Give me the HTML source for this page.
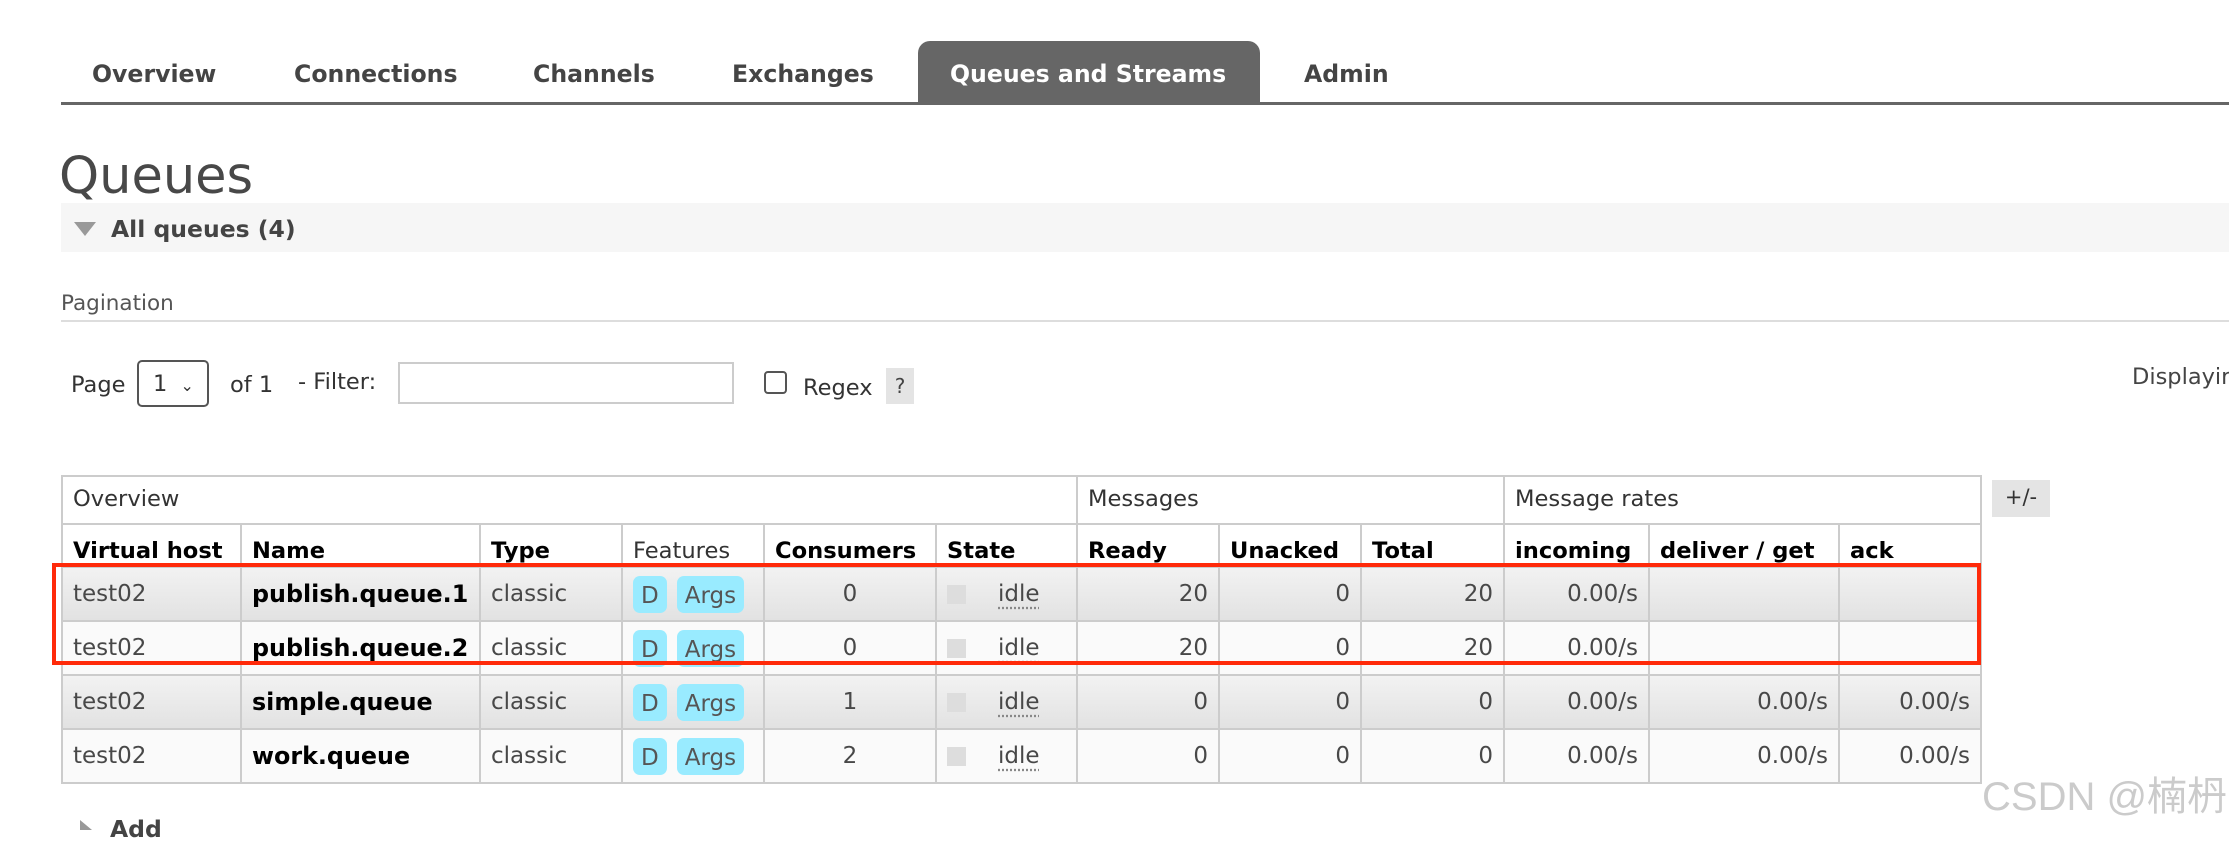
<!DOCTYPE html>
<html><head><meta charset="utf-8"><style>
*{margin:0;padding:0;box-sizing:border-box}
body{width:2229px;height:826px;overflow:hidden;background:#fff;font-family:"DejaVu Sans","Liberation Sans",sans-serif;color:#484848;position:relative}
.a{position:absolute;white-space:nowrap}
.nav{font-weight:bold;font-size:23.6px;color:#444;top:60px}
table{position:absolute;left:61px;top:475px;border-collapse:collapse;table-layout:fixed;width:1919px}
td,th{border:2px solid #ccc;font-size:23px;padding:0 10px;white-space:nowrap;overflow:hidden}
th{text-align:left;color:#000;font-weight:bold;vertical-align:bottom;padding-bottom:2px;font-size:22.6px}
th.n{font-weight:normal;color:#333}
tr.g th{height:48px;vertical-align:middle;font-weight:normal;color:#333}
tr.h th{height:43px}
tr.r td{height:54px}
tr.o td{background:linear-gradient(#f2f2f2,#e2e2e2)}
tr.e td{background:#fafafa}
td.r{text-align:right}td.c{text-align:center}
td b{color:#000;font-size:23.8px}
.bd{display:inline-block;background:#99ebff;border-radius:7px;padding:7px 8px 4px;margin-right:10px;color:#555;vertical-align:middle;line-height:26px}
.sq{display:inline-block;width:19px;height:19px;background:#ddd;margin-right:32px;vertical-align:middle}
.idle{text-decoration:underline dotted #888;text-underline-offset:6px}
</style></head><body>
<div class="a" style="left:918px;top:41px;width:342px;height:63px;background:#666;border-radius:12px 12px 0 0"></div>
<div class="a" style="left:61px;top:102px;width:2168px;height:3px;background:#666"></div>
<div class="a nav" style="left:92px">Overview</div>
<div class="a nav" style="left:294px">Connections</div>
<div class="a nav" style="left:533px">Channels</div>
<div class="a nav" style="left:732px">Exchanges</div>
<div class="a nav" style="left:950px;color:#fff">Queues and Streams</div>
<div class="a nav" style="left:1304px">Admin</div>
<div class="a" style="left:59px;top:147px;font-size:51px;color:#484848">Queues</div>
<div class="a" style="left:61px;top:203px;width:2168px;height:49px;background:#f6f6f6"></div>
<div class="a" style="left:74px;top:222px;width:0;height:0;border-left:11px solid transparent;border-right:11px solid transparent;border-top:14px solid #999"></div>
<div class="a" style="left:111px;top:215px;font-size:23.5px;font-weight:bold;color:#444">All queues (4)</div>
<div class="a" style="left:61px;top:291px;font-size:21.5px;color:#555">Pagination</div>
<div class="a" style="left:61px;top:320px;width:2168px;height:2px;background:#ddd"></div>
<div class="a" style="left:71px;top:372px;font-size:22.5px;color:#333">Page</div>
<div class="a" style="left:137px;top:360px;width:72px;height:47px;border:2px solid #555;border-radius:5px;font-size:22.5px;color:#333;padding:9px 0 0 14px">1 <span style="font-size:16px;margin-left:6px">&#8964;</span></div>
<div class="a" style="left:230px;top:372px;font-size:22.5px;color:#333">of 1</div>
<div class="a" style="left:298px;top:369px;font-size:22.5px;color:#333">- Filter:</div>
<div class="a" style="left:398px;top:362px;width:336px;height:42px;border:2px solid #ccc"></div>
<div class="a" style="left:764px;top:371px;width:23px;height:23px;border:2px solid #555;border-radius:4px"></div>
<div class="a" style="left:803px;top:375px;font-size:22.5px;color:#333">Regex</div>
<div class="a" style="left:886px;top:368px;width:28px;height:36px;background:#e4e4e4;font-size:20px;color:#444;text-align:center;padding-top:6px">?</div>
<div class="a" style="left:2132px;top:364px;font-size:22.5px;color:#444">Displaying</div>
<table>
<colgroup><col style="width:179px"><col style="width:239px"><col style="width:142px"><col style="width:142px"><col style="width:172px"><col style="width:141px"><col style="width:142px"><col style="width:142px"><col style="width:143px"><col style="width:145px"><col style="width:190px"><col style="width:142px"></colgroup>
<tr class="g"><th colspan="6">Overview</th><th colspan="3">Messages</th><th colspan="3">Message rates</th></tr>
<tr class="h"><th>Virtual host</th><th>Name</th><th>Type</th><th class="n">Features</th><th>Consumers</th><th>State</th><th>Ready</th><th>Unacked</th><th>Total</th><th>incoming</th><th>deliver / get</th><th>ack</th></tr>
<tr class="r o"><td>test02</td><td><b>publish.queue.1</b></td><td>classic</td><td><span class="bd">D</span><span class="bd">Args</span></td><td class="c">0</td><td><span class="sq"></span><span class="idle">idle</span></td><td class="r">20</td><td class="r">0</td><td class="r">20</td><td class="r">0.00/s</td><td></td><td></td></tr>
<tr class="r e"><td>test02</td><td><b>publish.queue.2</b></td><td>classic</td><td><span class="bd">D</span><span class="bd">Args</span></td><td class="c">0</td><td><span class="sq"></span><span class="idle">idle</span></td><td class="r">20</td><td class="r">0</td><td class="r">20</td><td class="r">0.00/s</td><td></td><td></td></tr>
<tr class="r o"><td>test02</td><td><b>simple.queue</b></td><td>classic</td><td><span class="bd">D</span><span class="bd">Args</span></td><td class="c">1</td><td><span class="sq"></span><span class="idle">idle</span></td><td class="r">0</td><td class="r">0</td><td class="r">0</td><td class="r">0.00/s</td><td class="r">0.00/s</td><td class="r">0.00/s</td></tr>
<tr class="r e"><td>test02</td><td><b>work.queue</b></td><td>classic</td><td><span class="bd">D</span><span class="bd">Args</span></td><td class="c">2</td><td><span class="sq"></span><span class="idle">idle</span></td><td class="r">0</td><td class="r">0</td><td class="r">0</td><td class="r">0.00/s</td><td class="r">0.00/s</td><td class="r">0.00/s</td></tr>
</table>
<div class="a" style="left:52px;top:563px;width:1929px;height:102px;border:4px solid #ff2a0a"></div>
<div class="a" style="left:1992px;top:480px;width:58px;height:37px;background:#e4e4e4;font-size:21px;color:#333;text-align:center;padding-top:5px">+/-</div>
<div class="a" style="left:80px;top:820px;width:0;height:0;border-top:10px solid transparent;border-left:12px solid #999"></div>
<div class="a" style="left:110px;top:815px;font-size:23.5px;font-weight:bold;color:#444">Add</div>
<div class="a" style="left:1982px;top:764px;font-size:40px;color:rgba(190,190,190,0.8);font-family:'Liberation Sans','Noto Sans CJK SC',sans-serif">CSDN @楠枬</div>
</body></html>
